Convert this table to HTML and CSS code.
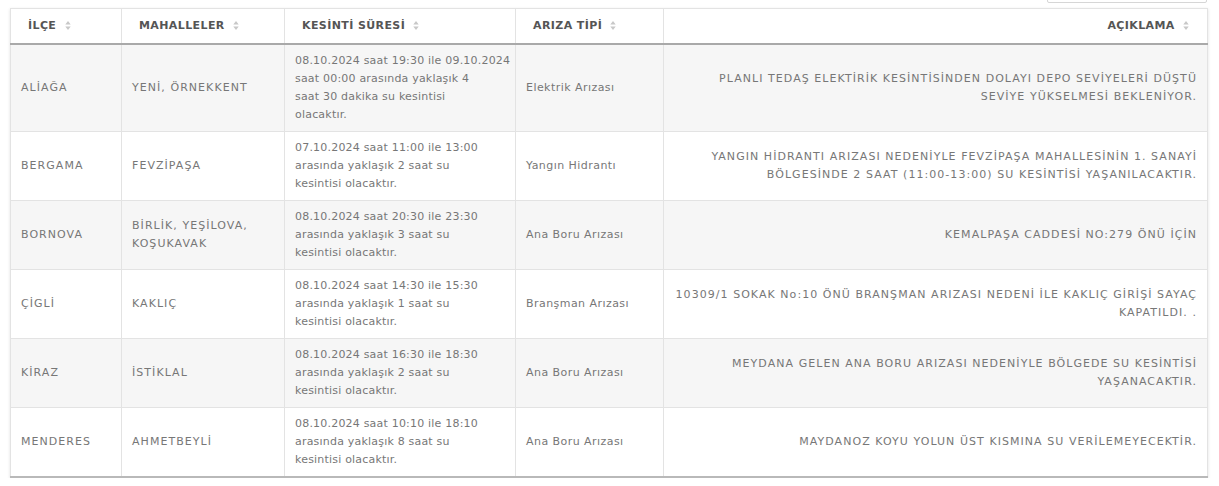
FILE: index.html
```html
<!DOCTYPE html>
<html lang="tr">
<head>
<meta charset="utf-8">
<title>Su Kesintileri</title>
<link rel="stylesheet" href="styles.css">
</head>
<body>
<div class="page">
  <div class="toolbar"><div class="search"></div></div>
  <table class="grid">
    <colgroup>
      <col class="c1"><col class="c2"><col class="c3"><col class="c4"><col class="c5">
    </colgroup>
    <thead>
      <tr>
        <th>İLÇE <svg class="sort" viewBox="0 0 6 10" width="6" height="9"><path d="M3 0L6 4H0Z M0 6H6L3 10Z"/></svg></th>
        <th>MAHALLELER <svg class="sort" viewBox="0 0 6 10" width="6" height="9"><path d="M3 0L6 4H0Z M0 6H6L3 10Z"/></svg></th>
        <th>KESİNTİ SÜRESİ <svg class="sort" viewBox="0 0 6 10" width="6" height="9"><path d="M3 0L6 4H0Z M0 6H6L3 10Z"/></svg></th>
        <th>ARIZA TİPİ <svg class="sort" viewBox="0 0 6 10" width="6" height="9"><path d="M3 0L6 4H0Z M0 6H6L3 10Z"/></svg></th>
        <th class="right">AÇIKLAMA <svg class="sort" viewBox="0 0 6 10" width="6" height="9"><path d="M3 0L6 4H0Z M0 6H6L3 10Z"/></svg></th>
      </tr>
    </thead>
    <tbody>
      <tr>
        <td class="caps">ALİAĞA</td>
        <td class="caps">YENİ, ÖRNEKKENT</td>
        <td class="time">08.10.2024 saat 19:30 ile 09.10.2024<br>saat 00:00 arasında yaklaşık 4<br>saat 30 dakika su kesintisi<br>olacaktır.</td>
        <td class="type">Elektrik Arızası</td>
        <td class="caps desc">PLANLI TEDAŞ ELEKTİRİK KESİNTİSİNDEN DOLAYI DEPO SEVİYELERİ DÜŞTÜ<br>SEVİYE YÜKSELMESİ BEKLENİYOR.</td>
      </tr>
      <tr>
        <td class="caps">BERGAMA</td>
        <td class="caps">FEVZİPAŞA</td>
        <td class="time">07.10.2024 saat 11:00 ile 13:00<br>arasında yaklaşık 2 saat su<br>kesintisi olacaktır.</td>
        <td class="type">Yangın Hidrantı</td>
        <td class="caps desc">YANGIN HİDRANTI ARIZASI NEDENİYLE FEVZİPAŞA MAHALLESİNİN 1. SANAYİ<br>BÖLGESİNDE 2 SAAT (11:00-13:00) SU KESİNTİSİ YAŞANILACAKTIR.</td>
      </tr>
      <tr>
        <td class="caps">BORNOVA</td>
        <td class="caps">BİRLİK, YEŞİLOVA,<br>KOŞUKAVAK</td>
        <td class="time">08.10.2024 saat 20:30 ile 23:30<br>arasında yaklaşık 3 saat su<br>kesintisi olacaktır.</td>
        <td class="type">Ana Boru Arızası</td>
        <td class="caps desc">KEMALPAŞA CADDESİ NO:279 ÖNÜ İÇİN</td>
      </tr>
      <tr>
        <td class="caps">ÇİGLİ</td>
        <td class="caps">KAKLIÇ</td>
        <td class="time">08.10.2024 saat 14:30 ile 15:30<br>arasında yaklaşık 1 saat su<br>kesintisi olacaktır.</td>
        <td class="type">Branşman Arızası</td>
        <td class="caps desc">10309/1 SOKAK No:10 ÖNÜ BRANŞMAN ARIZASI NEDENİ İLE KAKLIÇ GİRİŞİ SAYAÇ<br>KAPATILDI. .</td>
      </tr>
      <tr>
        <td class="caps">KİRAZ</td>
        <td class="caps">İSTİKLAL</td>
        <td class="time">08.10.2024 saat 16:30 ile 18:30<br>arasında yaklaşık 2 saat su<br>kesintisi olacaktır.</td>
        <td class="type">Ana Boru Arızası</td>
        <td class="caps desc">MEYDANA GELEN ANA BORU ARIZASI NEDENİYLE BÖLGEDE SU KESİNTİSİ<br>YAŞANACAKTIR.</td>
      </tr>
      <tr>
        <td class="caps">MENDERES</td>
        <td class="caps">AHMETBEYLİ</td>
        <td class="time">08.10.2024 saat 10:10 ile 18:10<br>arasında yaklaşık 8 saat su<br>kesintisi olacaktır.</td>
        <td class="type">Ana Boru Arızası</td>
        <td class="caps desc">MAYDANOZ KOYU YOLUN ÜST KISMINA SU VERİLEMEYECEKTİR.</td>
      </tr>
    </tbody>
  </table>
</div>
</body>
</html>
```

FILE: styles.css
```css
* { box-sizing: border-box; }
html, body { margin: 0; padding: 0; background: #ffffff; }
body {
  font-family: "DejaVu Sans", "Liberation Sans", sans-serif;
  font-size: 11px;
  color: #777777;
}
.page {
  padding: 0 12px 0 10px;
}
.toolbar {
  display: flex;
  justify-content: flex-end;
  height: 8px;
}
.search {
  width: 160px;
  height: 30px;
  margin-top: -27px;
  border: 1px solid #d6d6d6;
  border-radius: 2px;
  background: #fff;
}
.grid {
  width: 1197px;
  table-layout: fixed;
  border-collapse: collapse;
  border: 1px solid #e3e3e3;
  border-bottom: 2px solid #b9b9b9;
  box-shadow: 0 1px 3px rgba(0,0,0,0.12);
}
.c1 { width: 111px; }
.c2 { width: 163px; }
.c3 { width: 231px; }
.c4 { width: 148px; }
.c5 { width: 544px; }
th {
  height: 35px;
  padding: 0 17px;
  text-align: left;
  font-weight: 700;
  font-size: 11px;
  color: #555555;
  letter-spacing: 0.4px;
  border-left: 1px solid #e3e3e3;
  border-bottom: 2px solid #a9a9a9;
  white-space: nowrap;
}
th.right { text-align: right; padding-right: 18px; }
.sort {
  fill: #c8c8c8;
  margin-left: 4px;
  vertical-align: -1px;
}
td {
  padding: 7px 10px;
  line-height: 18px;
  vertical-align: middle;
  border-left: 1px solid #e3e3e3;
  border-top: 1px solid #e3e3e3;
  white-space: nowrap;
}
tbody tr:nth-child(odd) { background: #f6f6f6; }
tbody tr:nth-child(even) { background: #ffffff; }
td.caps { letter-spacing: 1.05px; }
td.time { letter-spacing: 0.2px; }
td.type { letter-spacing: 0.45px; }
td.desc { text-align: right; }
```
